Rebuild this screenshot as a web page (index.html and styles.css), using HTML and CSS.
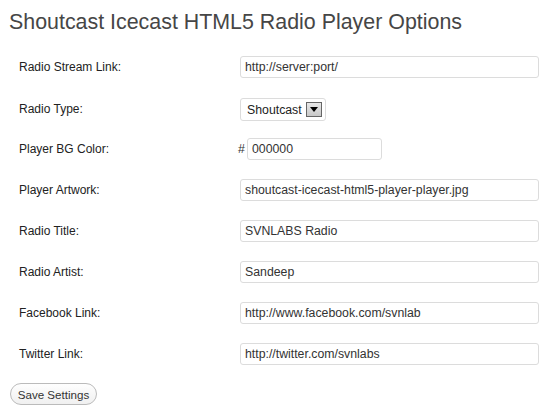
FILE: index.html
```html
<!DOCTYPE html>
<html>
<head>
<meta charset="utf-8">
<link rel="stylesheet" href="styles.css">
</head>
<body>
<div class="wrap">
  <h2 class="title">Shoutcast Icecast HTML5 Radio Player Options</h2>
  <form class="form">
    <div class="row"><label class="lbl">Radio Stream Link:</label><div class="field"><input class="txt" type="text" value="http://server:port/"></div></div>
    <div class="row"><label class="lbl">Radio Type:</label><div class="field"><div class="select"><span class="sel-text">Shoutcast</span><span class="sel-btn"><svg width="8" height="5" viewBox="0 0 8 5"><path d="M0 0H8L4 5Z" fill="#000"/></svg></span></div></div></div>
    <div class="row"><label class="lbl">Player BG Color:</label><div class="field"><span class="hash">#</span><input class="txt color" type="text" value="000000"></div></div>
    <div class="row"><label class="lbl">Player Artwork:</label><div class="field"><input class="txt" type="text" value="shoutcast-icecast-html5-player-player.jpg"></div></div>
    <div class="row"><label class="lbl">Radio Title:</label><div class="field"><input class="txt" type="text" value="SVNLABS Radio"></div></div>
    <div class="row"><label class="lbl">Radio Artist:</label><div class="field"><input class="txt" type="text" value="Sandeep"></div></div>
    <div class="row"><label class="lbl">Facebook Link:</label><div class="field"><input class="txt" type="text" value="http://www.facebook.com/svnlab"></div></div>
    <div class="row"><label class="lbl">Twitter Link:</label><div class="field"><input class="txt" type="text" value="http://twitter.com/svnlabs"></div></div>
    <div class="actions"><button class="btn" type="button">Save Settings</button></div>
  </form>
</div>
</body>
</html>
```
FILE: styles.css
```css
* { box-sizing: border-box; }
html, body { margin: 0; padding: 0; background: #fff; }
body { font-family: "Liberation Sans", Arial, sans-serif; color: #222; }
.wrap { padding: 7px 0 0 9px; }
.title {
  margin: 0;
  font-weight: normal;
  font-size: 21.4px;
  line-height: 30px;
  color: #464646;
}
.form { margin: 19px 0 0 0; }
.row {
  display: grid;
  grid-template-columns: 221px 299px;
  align-items: center;
  height: 22px;
  margin-bottom: 19px;
  padding-left: 10px;
}
.lbl { font-size: 12px; color: #222; }
.field { display: flex; align-items: center; }
.txt {
  width: 299px;
  height: 22px;
  border: 1px solid #dcdcdc;
  border-radius: 3px;
  padding: 0 4px;
  font-family: "Liberation Sans", Arial, sans-serif;
  font-size: 12.3px;
  color: #333;
  background: #fff;
  outline: none;
}
.hash { font-size: 12.3px; color: #333; width: 8px; margin-left: -2px; }
.txt.color { width: 135px; margin-left: 1px; }
.select {
  display: flex;
  align-items: center;
  width: 86px;
  height: 23px;
  border: 1px solid #dcdcdc;
  border-radius: 3px;
  padding: 0 3px 0 6px;
  font-size: 12.3px;
  color: #222;
  margin-top: 1px;
}
.sel-text { flex: 1; }
.sel-btn {
  width: 16px;
  height: 15px;
  border: 1px solid #666;
  background: linear-gradient(#e8e8e8, #c8c8c8);
  display: flex;
  align-items: center;
  justify-content: center;
}
.actions { padding-left: 1px; margin-top: -1px; }
.btn {
  height: 22px;
  width: 87px;
  border: 1px solid #bbb;
  border-radius: 11px;
  background: linear-gradient(#fefefe, #f0f0f0);
  font-family: "Liberation Sans", Arial, sans-serif;
  font-size: 11.6px;
  color: #333;
  padding: 0;
}
```
